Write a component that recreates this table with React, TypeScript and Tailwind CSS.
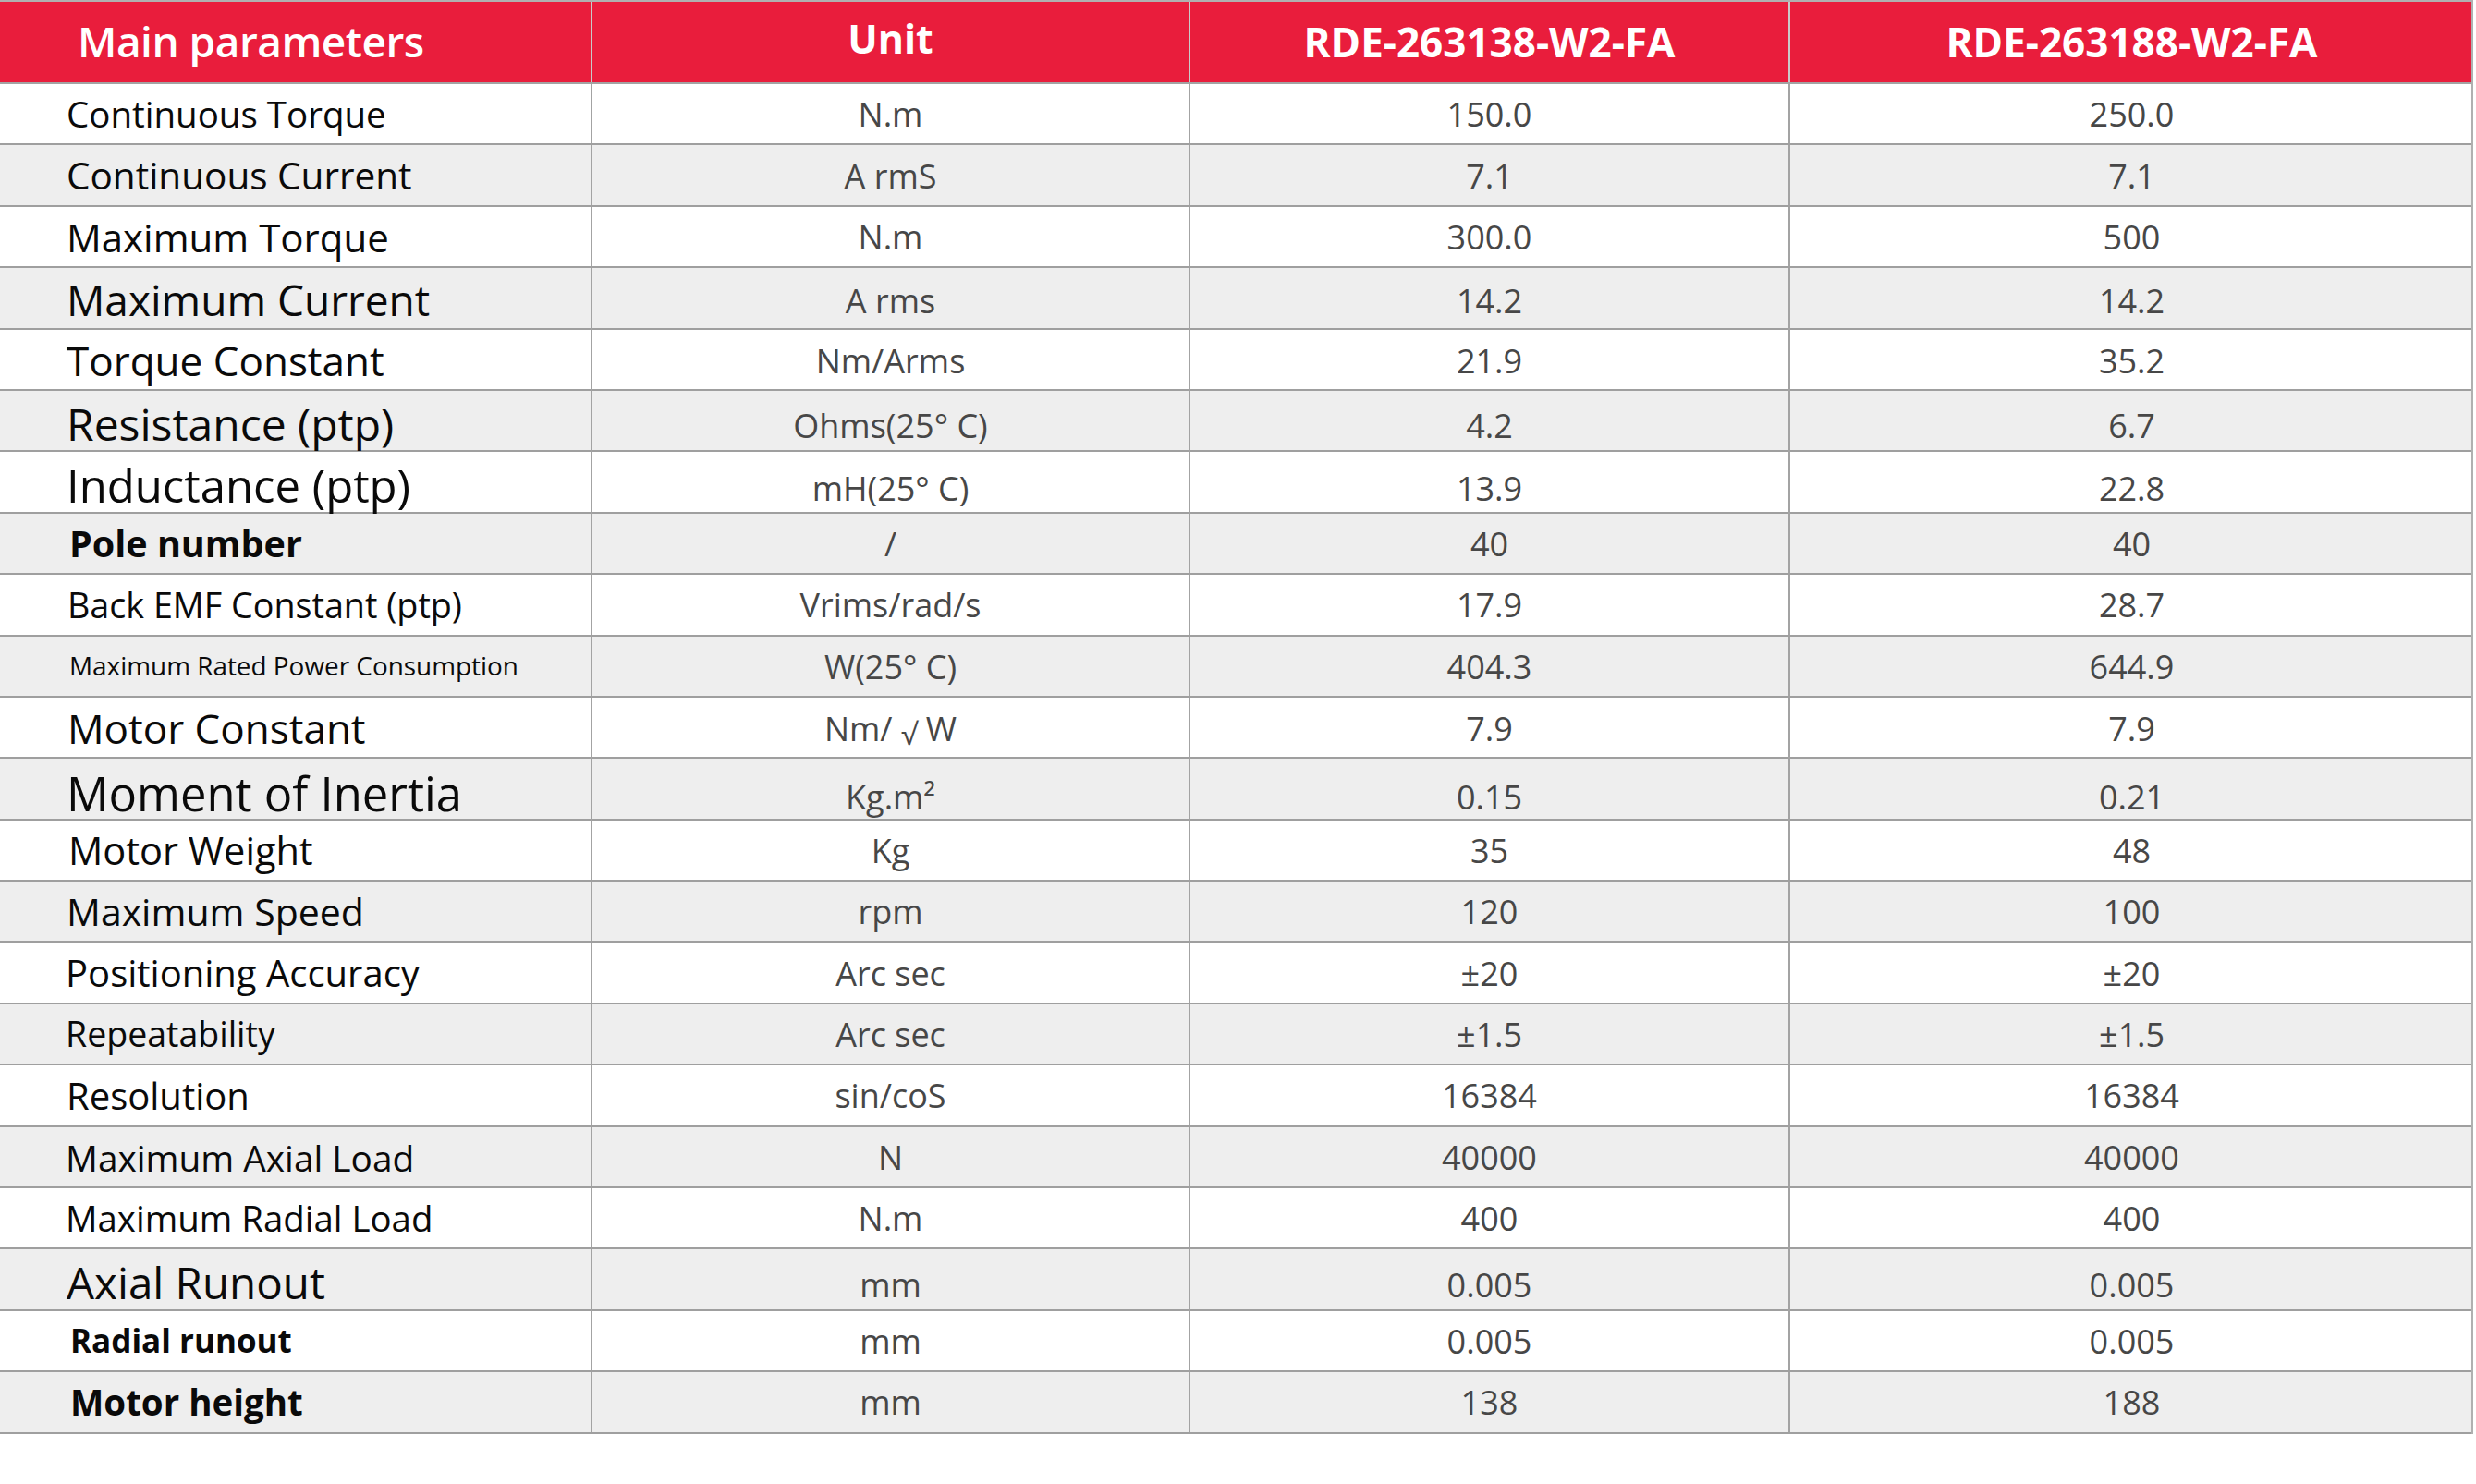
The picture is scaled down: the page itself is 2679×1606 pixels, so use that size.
const rows = [
  { label: "Continuous Torque", cls: "text-[38.5px] pl-[72px] pt-[1px]", unit: "N.m", a: "150.0", b: "250.0" },
  { label: "Continuous Current", cls: "text-[40.5px] pl-[72px] pt-[1px]", unit: "A rmS", a: "7.1", b: "7.1" },
  { label: "Maximum Torque", cls: "text-[42px] pl-[72px] pt-[1px]", unit: "N.m", a: "300.0", b: "500" },
  { label: "Maximum Current", cls: "text-[46px] pl-[72px]", unit: "A rms", a: "14.2", b: "14.2" },
  { label: "Torque Constant", cls: "text-[44px] pl-[72px]", unit: "Nm/Arms", a: "21.9", b: "35.2" },
  { label: "Resistance (ptp)", cls: "text-[48px] pl-[72px] pb-[2px]", unit: "Ohms(25° C)", a: "4.2", b: "6.7" },
  { label: "Inductance (ptp)", cls: "text-[49px] pl-[72px] pb-[3px]", unit: "mH(25° C)", a: "13.9", b: "22.8" },
  { label: "Pole number", cls: "text-[39.5px] font-bold pl-[75px] pt-[1px]", unit: "/", a: "40", b: "40" },
  { label: "Back EMF Constant (ptp)", cls: "text-[37.7px] pl-[73px] pt-[1px]", unit: "Vrims/rad/s", a: "17.9", b: "28.7" },
  { label: "Maximum Rated Power Consumption", cls: "text-[27.9px] pl-[75px] pt-[1px]", unit: "W(25° C)", a: "404.3", b: "644.9" },
  { label: "Motor Constant", cls: "text-[44px] pl-[73px]", unit: "sqrt", a: "7.9", b: "7.9" },
  { label: "Moment of Inertia", cls: "text-[50.7px] pl-[72px] pb-[5px]", unit: "Kg.m²", a: "0.15", b: "0.21" },
  { label: "Motor Weight", cls: "text-[41.5px] pl-[74px] pt-[1px]", unit: "Kg", a: "35", b: "48" },
  { label: "Maximum Speed", cls: "text-[41px] pl-[72px] pt-[1px]", unit: "rpm", a: "120", b: "100" },
  { label: "Positioning Accuracy", cls: "text-[40px] pl-[71px] pt-[1px]", unit: "Arc sec", a: "±20", b: "±20" },
  { label: "Repeatability", cls: "text-[37.5px] pl-[71px] pt-[1px]", unit: "Arc sec", a: "±1.5", b: "±1.5" },
  { label: "Resolution", cls: "text-[40px] pl-[72px] pt-[1px]", unit: "sin/coS", a: "16384", b: "16384" },
  { label: "Maximum Axial Load", cls: "text-[38.8px] pl-[71px] pt-[2px]", unit: "N", a: "40000", b: "40000" },
  { label: "Maximum Radial Load", cls: "text-[38.4px] pl-[71px] pt-[1px]", unit: "N.m", a: "400", b: "400" },
  { label: "Axial Runout", cls: "text-[47.5px] pl-[72px] pb-[3px]", unit: "mm", a: "0.005", b: "0.005" },
  { label: "Radial runout", cls: "text-[35px] font-bold pl-[76px] pt-[1px]", unit: "mm", a: "0.005", b: "0.005" },
  { label: "Motor height", cls: "text-[38.5px] font-bold pl-[76px]", unit: "mm", a: "138", b: "188" },
]

const cols = "grid grid-cols-[641px_647px_649px_739px]"

function Unit({ u }: { u: string }) {
  if (u === "sqrt")
    return (
      <span>
        Nm/ <span className="text-[32px] relative top-[4px]">√</span> W
      </span>
    )
  return <span>{u}</span>
}

export default function App() {
  return (
    <div className="bg-white min-h-screen font-['Open_Sans',sans-serif]">
      <div className="w-[2676px] border-t-2 border-r-2 border-[#b0b0b0]">
        <div className={`${cols} h-[89px] bg-[#e91d3c] text-white border-b-2 border-[#a3a3a3]`}>
          <div className="flex items-center pl-[84px] pb-[2px] text-[46px] font-semibold tracking-[-0.5px] border-r-2 border-[#c9c9c9]">
            Main parameters
          </div>
          <div className="flex items-center justify-center pb-[6px] text-[43px] font-bold border-r-2 border-[#c9c9c9]">
            Unit
          </div>
          <div className="flex items-center justify-center pb-[2px] text-[44px] font-bold border-r-2 border-[#c9c9c9]">
            RDE-263138-W2-FA
          </div>
          <div className="flex items-center justify-center pb-[2px] text-[44px] font-bold">
            RDE-263188-W2-FA
          </div>
        </div>
        {rows.map((r, i) => (
          <div
            key={r.label}
            className={`${cols} h-[66.4px] border-b-2 border-[#9f9f9f] ${i % 2 ? "bg-[#eeeeee]" : "bg-white"}`}
          >
            <div className={`flex items-center text-[#0a0a0a] whitespace-nowrap border-r-2 border-[#a3a3a3] ${r.cls}`}>
              {r.label}
            </div>
            <div className="flex items-center justify-center pt-[2px] text-[36px] text-[#474747] border-r-2 border-[#a3a3a3]">
              <Unit u={r.unit} />
            </div>
            <div className="flex items-center justify-center pt-[2px] text-[36px] text-[#474747] border-r-2 border-[#a3a3a3]">
              {r.a}
            </div>
            <div className="flex items-center justify-center pt-[2px] text-[36px] text-[#474747]">
              {r.b}
            </div>
          </div>
        ))}
      </div>
    </div>
  )
}
